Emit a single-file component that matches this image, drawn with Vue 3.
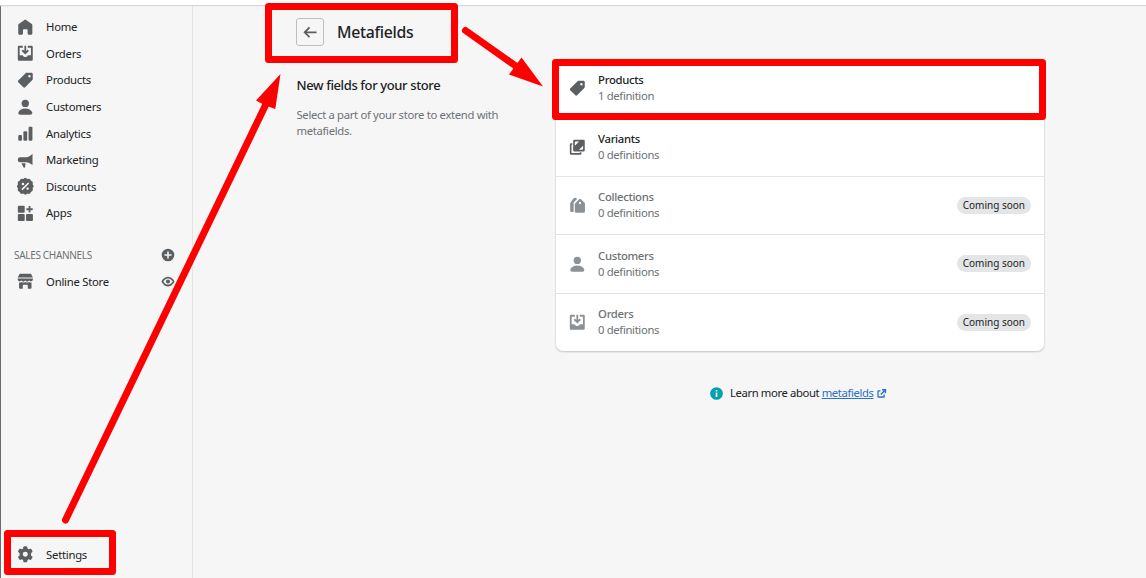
<script setup>
import { h } from 'vue'

const shapes = {
  home: '<path d="M18.500 7.3v10.2c0 .8-.7 1.5-1.5 1.5h-2.700c-.8 0-1.500-.7-1.500-1.500V13.500a1 1 0 0 0-1-1H8.200a1 1 0 0 0-1 1v4c0 .8-.7 1.500-1.500 1.500H3c-.8 0-1.500-.7-1.500-1.500V7.300c0-.5.200-1 .6-1.200l6.900-5a1.700 1.700 0 0 1 2 0l6.900 5c.4.200.6.700.6 1.200z"/>',
  orders: '<path fill-rule="evenodd" d="M2.500 1H7v2.200H3.200V12.500h3.300c.5 0 .8.3 1 .7.400.800 1.300 1.300 2.500 1.300s2.100-.5 2.500-1.300c.2-.4.500-.7 1-.7h3.300V3.200H13V1h4.500A1.500 1.500 0 0 1 19 2.500v15a1.500 1.500 0 0 1-1.500 1.500h-15A1.500 1.500 0 0 1 1 17.500v-15A1.500 1.500 0 0 1 2.500 1z"/><path d="M8.900 1h2.200v6.200l1.700-1.700 1.600 1.600L10 11.500 5.600 7.100l1.600-1.600 1.700 1.700z"/>',
  tag: '<path fill-rule="evenodd" d="M10.300 1.500 1.500 10.200a1.500 1.500 0 0 0 0 2.100l6.100 6.200a1.500 1.500 0 0 0 2.200 0l8.700-8.800c.3-.3.500-.7.500-1.200v-6A1.500 1.500 0 0 0 17.500 1h-6c-.5 0-.9.200-1.200.5zM15 6.500a1.500 1.500 0 1 0 0-3 1.500 1.500 0 0 0 0 3z"/>',
  customer: '<circle cx="10" cy="5.300" r="4.400"/><path d="M1.700 16C2.800 13.200 6 11.500 10 11.500s7.200 1.700 8.300 4.500c.6 1.500-.6 3-2.100 3H3.800c-1.500 0-2.700-1.500-2.100-3z"/>',
  analytics: '<rect x="1.500" y="12" width="4.500" height="7" rx="1.300"/><rect x="7.700" y="7.500" width="4.600" height="11.500" rx="1.300"/><rect x="14" y="2" width="4.600" height="17" rx="1.300"/>',
  marketing: '<path d="M18.700 2v13.800c-2.600-2.100-5-3.100-7.700-3.400H3.600A2.600 2.600 0 0 1 1 9.800V9a2.600 2.600 0 0 1 2.600-2.600H11c2.600-.3 5.100-1.800 7.700-4.400z"/><path d="M5.300 13.500h5l-.4 4.300c-.1 1.300-1.800 1.500-2.300.3z"/>',
  discount: '<path fill-rule="evenodd" d="M7.600 1.300a3.200 3.200 0 0 1 4.800 0 3.200 3.200 0 0 1 4.400 1.900 3.200 3.200 0 0 1 1.900 4.400 3.200 3.200 0 0 1 0 4.800 3.200 3.200 0 0 1-1.900 4.400 3.200 3.200 0 0 1-4.400 1.900 3.200 3.200 0 0 1-4.800 0 3.200 3.200 0 0 1-4.400-1.900 3.200 3.200 0 0 1-1.900-4.400 3.200 3.200 0 0 1 0-4.800 3.200 3.200 0 0 1 1.900-4.400 3.200 3.200 0 0 1 4.400-1.900zM7.200 5.700a1.500 1.500 0 1 0 0 3 1.500 1.500 0 0 0 0-3zm5.600 5.600a1.500 1.500 0 1 0 0 3 1.500 1.500 0 0 0 0-3zm.5-6-8 8 1.400 1.400 8-8z"/>',
  apps: '<rect x="1" y="1" width="8.300" height="8.300" rx="1.200"/><rect x="1" y="10.900" width="8.300" height="8.300" rx="1.200"/><rect x="10.900" y="10.900" width="8.300" height="8.300" rx="1.200"/><path d="M14 1.200h2.200V4h2.700v2.200h-2.700V9H14V6.200h-2.700V4H14z"/>',
  store: '<path d="M4 .9h12c.5 0 .9.200 1.100.6L19.200 5.500H.8l2.100-4C3.100 1.100 3.500.9 4 .9z"/><path d="M.8 6.600h18.400v.9a2.600 2.600 0 0 1-4.600 1.600 3 3 0 0 1-4.600 0 3 3 0 0 1-4.600 0A2.600 2.600 0 0 1 .8 7.500z"/><path d="M2.500 11.300c1 .2 2 0 2.900-.6 1.400 1 3.200 1 4.600 0 1.400 1 3.200 1 4.600 0 .9.600 1.900.8 2.900.6v6.400c0 .8-.6 1.400-1.400 1.400H13v-4a1 1 0 0 0-1-1H8a1 1 0 0 0-1 1v4H3.900c-.8 0-1.400-.6-1.400-1.400z"/>',
  gear: '<path fill-rule="evenodd" d="M8.600.4h2.800c.5 0 .8.300.9.700l.4 2 1.400.8 2-.7c.400-.1.800 0 1.100.4l1.400 2.500c.2.400.1.800-.2 1.100l-1.500 1.400v2.800l1.500 1.400c.3.300.4.700.2 1.100l-1.400 2.500c-.3.400-.7.500-1.100.4l-2-.7-1.400.8-.4 2c-.1.400-.4.700-.9.700H8.600c-.5 0-.8-.3-.9-.7l-.4-2-1.400-.8-2 .7c-.4.100-.8 0-1.100-.4l-1.400-2.500c-.2-.4-.1-.8.2-1.100l1.500-1.400V8.600L1.600 7.200c-.3-.3-.4-.7-.2-1.100l1.400-2.500c.3-.4.700-.5 1.100-.4l2 .7 1.400-.8.4-2c.1-.4.4-.7.9-.7zM10 7a3 3 0 1 0 0 6 3 3 0 0 0 0-6z"/>',
  plus: '<path fill-rule="evenodd" d="M10 1a9 9 0 1 0 0 18 9 9 0 0 0 0-18zM8.900 5h2.200v3.900H15v2.200h-3.900V15H8.900v-3.900H5V8.900h3.900z"/>',
  eye: '<path fill-rule="evenodd" d="M19.900 9.600C19.800 9.400 16.700 2.500 10 2.500S.200 9.400.100 9.600v.8c.1.200 3.200 7.100 9.900 7.100s9.800-6.900 9.900-7.100zM10 14.800c-4 0-6.400-3.500-7.200-4.800C3.600 8.700 6 5.200 10 5.200s6.400 3.500 7.200 4.800c-.8 1.300-3.200 4.800-7.200 4.800z"/><circle cx="10" cy="10" r="3.200"/>',
  back: '<path d="M17.500 8.900H5.800l4-4-1.500-1.500L1.700 10l6.600 6.600 1.500-1.500-4-4h11.700z"/>',
  variants: '<path fill-rule="evenodd" d="M6.500 1h11A1.500 1.500 0 0 1 19 2.500v11a1.500 1.500 0 0 1-1.500 1.500h-11A1.500 1.500 0 0 1 5 13.500v-11A1.500 1.500 0 0 1 6.500 1zm.5 7 5.200-5H8.500C7.700 3 7 3.700 7 4.500zm5 5h3.500c.8 0 1.500-.7 1.500-1.500V8z"/><path d="M4 5v2H3v10h10v-1h2v1.500a1.500 1.500 0 0 1-1.500 1.500h-11A1.500 1.500 0 0 1 1 17.500v-11A1.500 1.500 0 0 1 2.500 5z"/>',
  collections: '<path fill-rule="evenodd" d="m7.500 7.500 4.600-4.700c.7-.7 1.700-.7 2.400 0L18.700 7c.3.300.5.700.5 1.100v9.400a1.500 1.500 0 0 1-1.500 1.500H8.500A1.500 1.500 0 0 1 7 17.500V8.600c0-.4.200-.8.500-1.100zm5.700-1.700a1.400 1.400 0 1 0 0 2.800 1.400 1.400 0 0 0 0-2.800z"/><path d="M8 1.200 10 2 6.200 6.100c-.4.400-.6.900-.6 1.500V18H2.900a1.500 1.500 0 0 1-1.500-1.500V8c0-.5.100-1 .4-1.400l3.500-4.700A2.400 2.400 0 0 1 8 1.200z"/>',
  info: '<circle cx="10" cy="10" r="9.800" fill="#00a0ac"/><path fill="#fff" d="M8.800 4.500h2.500v2.300H8.800zM8.800 8.500h2.500v7H8.800z"/>',
  external: '<path d="M11 2h7.500v7.500H16V6.200l-6.500 6.500-1.800-1.800 6.500-6.500H11z"/><path d="M4.500 4H8v2.500H4.800v8.700h8.700V12H16v4a1.500 1.500 0 0 1-1.500 1.500H4A1.500 1.500 0 0 1 2.500 16V5.500A1.500 1.500 0 0 1 4 4z"/>',
}

const Glyph = (props) =>
  h('svg', { viewBox: '0 0 20 20', fill: 'currentColor', 'aria-hidden': 'true', innerHTML: shapes[props.name] })
Glyph.props = ['name']

const nav = [
  ['home', 'Home'],
  ['orders', 'Orders'],
  ['tag', 'Products'],
  ['customer', 'Customers'],
  ['analytics', 'Analytics'],
  ['marketing', 'Marketing'],
  ['discount', 'Discounts'],
  ['apps', 'Apps'],
]

const resources = [
  { icon: 'tag', name: 'Products', count: '1 definition' },
  { icon: 'variants', name: 'Variants', count: '0 definitions' },
  { icon: 'collections', name: 'Collections', count: '0 definitions', soon: true },
  { icon: 'customer', name: 'Customers', count: '0 definitions', soon: true },
  { icon: 'orders', name: 'Orders', count: '0 definitions', soon: true },
]
</script>

<template>
  <div class="screen">
    <header class="topbar"></header>
    <div class="body">
      <aside class="sidebar">
        <nav>
          <a v-for="[icon, label] in nav" :key="label" class="nav-item">
            <Glyph :name="icon" class="icon" /><span>{{ label }}</span>
          </a>
        </nav>
        <div class="section"><span>SALES CHANNELS</span><Glyph name="plus" class="small" /></div>
        <a class="nav-item">
          <Glyph name="store" class="icon" /><span>Online Store</span><Glyph name="eye" class="small eye" />
        </a>
        <a class="nav-item settings"><Glyph name="gear" class="icon" /><span>Settings</span></a>
      </aside>

      <main class="content">
        <section class="intro">
          <div class="title">
            <button class="back" aria-label="Back"><Glyph name="back" class="icon" /></button>
            <h1>Metafields</h1>
          </div>
          <h2>New fields for your store</h2>
          <p>Select a part of your store to extend with<br />metafields.</p>
        </section>

        <section class="main-col">
          <ul class="card">
            <li v-for="r in resources" :key="r.name" :class="{ disabled: r.soon }">
              <Glyph :name="r.icon" class="icon" />
              <div class="label">
                <strong>{{ r.name }}</strong>
                <span>{{ r.count }}</span>
              </div>
              <em v-if="r.soon" class="badge">Coming soon</em>
            </li>
          </ul>
          <div class="help">
            <Glyph name="info" class="info" />
            <span>Learn more about <a>metafields</a></span>
            <Glyph name="external" class="external" />
          </div>
        </section>
      </main>
    </div>

    <svg class="annotations" viewBox="0 0 1146 578" aria-hidden="true">
      <g fill="none" stroke="#f00" stroke-width="7" stroke-linejoin="round" stroke-linecap="round">
        <rect x="7.500" y="533.500" width="105" height="38" />
        <rect x="268.500" y="6.500" width="186" height="53" />
        <rect x="555.500" y="62.500" width="487" height="54" />
        <path d="M65.500 520 267 102M465.500 30.500 520 69" />
      </g>
      <path fill="#f00" d="M280.500 74 275.300 109 267 106 262.500 104 256 100.500zM543 86.500 521.500 57.500 509 74.500z" />
    </svg>
  </div>
</template>

<style>
body { background: #f6f6f7; overflow: hidden; }
</style>

<style scoped>
* { box-sizing: border-box; }
.screen {
  position: relative;
  display: flex;
  flex-direction: column;
  height: 578px;
  background: #f6f6f7;
  color: #202223;
  font-family: "Noto Sans", "Open Sans", sans-serif;
  font-size: 11.300px;
  line-height: 16px;
  white-space: nowrap;
}
.topbar { height: 5px; background: #fff; box-shadow: 0 1px 1px #d5d6d8; z-index: 1; }
.body { display: flex; flex: 1; border-left: 1px solid #6b6b6b; }
.sidebar {
  display: flex;
  flex-direction: column;
  width: 192px;
  padding-top: 8.900px;
  border-right: 1px solid #e1e3e5;
}
.nav-item { display: flex; align-items: center; height: 26.600px; padding: 0 17px 0 16px; }
.nav-item span { margin-left: 12.500px; letter-spacing: -0.260px; }
.icon { width: 16.600px; height: 16.600px; flex: none; color: #5c5f62; }
.small { width: 14px; height: 14px; color: #5c5f62; margin-left: auto; }
.eye { height: 13px; margin-bottom: 1px; }
.section {
  display: flex;
  align-items: center;
  height: 27px;
  margin-top: 14.600px;
  padding: 0 17px 0 13px;
  font-size: 10px;
  letter-spacing: -0.320px;
  color: #6d7175;
}
.settings { margin-top: auto; margin-bottom: 10px; }
.content { display: flex; flex: 1; padding-left: 103px; }
.intro { width: 260px; padding-top: 13px; }
.title { display: flex; align-items: center; gap: 13px; height: 28px; }
.back {
  display: flex;
  align-items: center;
  justify-content: center;
  width: 28px;
  height: 28px;
  padding: 0;
  border: 1px solid #babfc3;
  border-radius: 3px;
  background: transparent;
}
h1 { margin: 0; font-size: 15.800px; line-height: 24px; font-weight: 500; letter-spacing: -0.300px; }
h2 { margin: 31px 0 0 0.500px; font-size: 13px; line-height: 17px; font-weight: 500; letter-spacing: -0.380px; }
p { margin: 13px 0 0 0.500px; font-size: 11.300px; line-height: 16px; letter-spacing: -0.330px; color: #6d7175; }
.main-col { width: 488px; padding-top: 53.600px; }
.card {
  margin: 0;
  padding: 0;
  list-style: none;
  background: #fff;
  border-radius: 7px;
  box-shadow: 0 0 3px rgba(23, 24, 24, .08), 0 1px 2px rgba(0, 0, 0, .18);
}
.card li { display: flex; align-items: center; height: 58.500px; padding: 0 13px; }
.card li + li { border-top: 1px solid #e1e3e5; }
.label { display: flex; flex-direction: column; margin-left: 12.500px; }
.label strong { font-weight: 500; letter-spacing: -0.320px; }
.label span { color: #6d7175; letter-spacing: -0.360px; }
.disabled strong { color: #6d7175; }
.disabled .icon { color: #8c9196; }
.badge {
  margin-left: auto;
  padding: 0 6px;
  border-radius: 9px;
  background: #e4e5e7;
  font-size: 10px;
  font-style: normal;
  line-height: 17px;
}
.help { display: flex; align-items: center; height: 18px; margin-top: 33px; padding-left: 153.500px; }
.help span { letter-spacing: -0.400px; }
.info { width: 13px; height: 13px; margin-right: 7.500px; }
.help a { color: #2c6ecb; text-decoration: underline; }
.external { width: 11px; height: 11px; margin-left: 3px; color: #2c6ecb; }
.annotations { position: absolute; inset: 0; width: 1146px; height: 578px; z-index: 2; }
</style>
